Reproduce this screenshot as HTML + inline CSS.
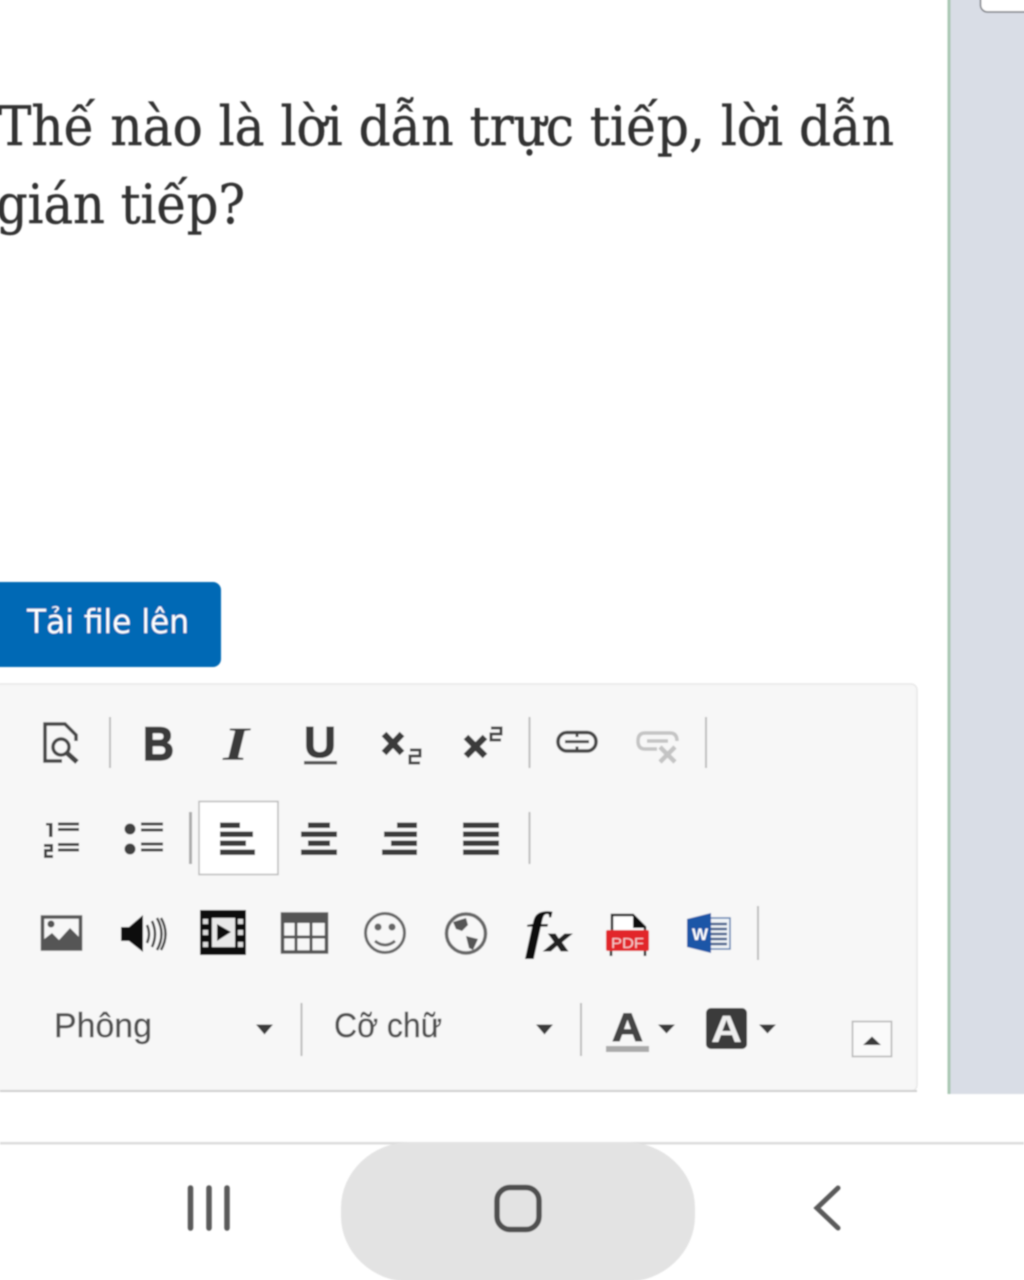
<!DOCTYPE html>
<html>
<head>
<meta charset="utf-8">
<style>
html,body{margin:0;padding:0;background:#fff;width:1024px;height:1280px;overflow:hidden}
svg{display:block;position:absolute;left:0;top:0}
</style>
</head>
<body>
<svg width="1024" height="1280" viewBox="0 0 1024 1280" xmlns="http://www.w3.org/2000/svg">
<defs><filter id="b" x="-5%" y="-5%" width="110%" height="110%"><feGaussianBlur stdDeviation="0.7"/></filter></defs>
<rect width="1024" height="1280" fill="#fff"/>
<g filter="url(#b)">
<!-- sidebar -->
<rect x="948" y="-5" width="80" height="1099" fill="#d9dde6"/>
<rect x="947.5" y="-5" width="3" height="1099" fill="#a9c7b2"/>
<rect x="980.500" y="-10" width="60" height="22" rx="7" fill="#fff" stroke="#77797f" stroke-width="1.500"/>

<!-- title -->
<text x="-2" y="145" font-family="'DejaVu Serif',serif" font-size="54" fill="#333" stroke="#333" stroke-width="0.5" textLength="896" lengthAdjust="spacingAndGlyphs">Thế nào là lời dẫn trực tiếp, lời dẫn</text>
<text x="-4" y="223" font-family="'DejaVu Serif',serif" font-size="54" fill="#333" stroke="#333" stroke-width="0.5" textLength="249" lengthAdjust="spacingAndGlyphs">gián tiếp?</text>

<!-- button -->
<rect x="-10" y="582" width="231" height="85" rx="8" fill="#0069b5"/>
<text x="27" y="633" font-family="'DejaVu Sans',sans-serif" font-size="33" fill="#fff" textLength="162" lengthAdjust="spacingAndGlyphs">Tải file lên</text>

<!-- panel -->
<rect x="-6" y="684" width="923" height="407" rx="6" fill="#f7f7f7" stroke="#e8e8e8" stroke-width="1.500"/>
<rect x="0" y="1090" width="917" height="2" fill="#cfcfcf"/>

<!-- separators -->
<g fill="#bdbdbd">
<rect x="109" y="717" width="2" height="51"/>
<rect x="528.500" y="717" width="2" height="51"/>
<rect x="705" y="717" width="2" height="51"/>
<rect x="189" y="812" width="3" height="52" fill="#aaa"/>
<rect x="528.500" y="812" width="2" height="52"/>
<rect x="757" y="906" width="2" height="54"/>
<rect x="300.500" y="1003" width="2" height="53"/>
<rect x="580" y="1003" width="2" height="53"/>
</g>

<!-- row 1 -->
<g fill="none" stroke="#444" stroke-width="3.500">
<path d="M62 761H45V724H65L76 735V741"/>
<circle cx="61" cy="747" r="8"/>
<path d="M67 753L77 762" stroke-width="5"/>
</g>
<text x="143" y="760" font-family="'Liberation Sans',sans-serif" font-weight="700" font-size="47" fill="#3a3a3a" stroke="#3a3a3a" stroke-width="1.500" textLength="31" lengthAdjust="spacingAndGlyphs">B</text>
<text x="223" y="760" font-family="'Liberation Serif',serif" font-weight="700" font-style="italic" font-size="48" fill="#3a3a3a" textLength="26" lengthAdjust="spacingAndGlyphs">I</text>
<text x="304" y="757" font-family="'Liberation Sans',sans-serif" font-weight="700" font-size="44" fill="#3a3a3a" stroke="#3a3a3a" stroke-width="1" textLength="32" lengthAdjust="spacingAndGlyphs">U</text>
<rect x="304" y="761" width="33" height="3.500" fill="#555"/>
<g fill="none" stroke="#3a3a3a" stroke-width="6.500">
<path d="M384 734L402 753M402 734L384 753"/>
<path d="M466 737L485 756M485 737L466 756"/>
</g>
<g fill="none" stroke="#444" stroke-width="3">
<path d="M410 750H420V756H410V763H420"/>
<path d="M491 728H501V734H491V740H501"/>
</g>
<g fill="none" stroke="#444">
<rect x="558" y="732.500" width="38" height="18.500" rx="9" stroke-width="3.500"/>
<path d="M565 741.700H589" stroke-width="2.800"/>
<path d="M577 733V737M577 746.500V750.500" stroke="#444" stroke-width="3"/>
</g>
<g fill="none" stroke="#c4c4c4" stroke-width="3.500">
<path d="M660 733H645Q638 733 638 741Q638 749 645 749H657"/>
<path d="M660 733H670Q677 733 677 741"/>
<path d="M647 741H668"/>
<path d="M660 747L675 762M675 747L660 762" stroke-width="4.500"/>
</g>

<!-- row 2 -->
<g fill="#404040">
<rect x="58" y="822.500" width="21" height="3"/><rect x="58" y="828" width="21" height="3"/>
<rect x="58" y="843" width="21" height="3"/><rect x="58" y="848.500" width="21" height="3"/>
<rect x="49" y="823" width="3.500" height="14"/><rect x="46" y="823" width="5" height="2.500"/>
<path d="M44 844H53V852H47V855H53V858H44V849H50V847H44Z"/>
<circle cx="130" cy="829" r="5.500"/><circle cx="130" cy="849" r="5.500"/>
<rect x="141" y="822.500" width="22" height="3"/><rect x="141" y="828.500" width="22" height="3"/>
<rect x="141" y="842.500" width="22" height="3"/><rect x="141" y="848.500" width="22" height="3"/>
</g>
<rect x="199" y="801.500" width="79" height="73" fill="#fff" stroke="#bbb" stroke-width="1.500"/>
<g fill="#3a3a3a">
<rect x="220" y="822.500" width="20" height="5.500"/><rect x="220" y="831.500" width="33" height="5.500"/><rect x="220" y="840.500" width="26" height="5.500"/><rect x="220" y="849.500" width="35" height="5.500"/>
<rect x="308" y="822.500" width="22" height="5.500"/><rect x="301" y="831.500" width="36" height="5.500"/><rect x="308" y="840.500" width="22" height="5.500"/><rect x="301" y="849.500" width="36" height="5.500"/>
<rect x="397" y="822.500" width="20" height="5.500"/><rect x="384" y="831.500" width="33" height="5.500"/><rect x="391" y="840.500" width="26" height="5.500"/><rect x="382" y="849.500" width="35" height="5.500"/>
<rect x="463" y="822.500" width="36" height="5.500"/><rect x="463" y="831.500" width="36" height="5.500"/><rect x="463" y="840.500" width="36" height="5.500"/><rect x="463" y="849.500" width="36" height="5.500"/>
</g>

<!-- row 3 -->
<rect x="42.500" y="917" width="38" height="32" fill="#f7f7f7" stroke="#555" stroke-width="3.500"/>
<circle cx="51" cy="924" r="3.500" fill="#555"/>
<path d="M43 949V940L52 933L59 940L70 928L80 938V949Z" fill="#555"/>
<path d="M121 927H129L143 915V952L129 941H121Z" fill="#111"/>
<g fill="none" stroke="#444" stroke-width="2.500">
<path d="M147 925Q151 934 147 943"/><path d="M152 921Q158 934 152 947"/><path d="M157 918Q166 934 157 950"/><path d="M161 918Q170 934 161 950"/>
</g>
<rect x="200" y="910" width="46" height="45" fill="#0a0a0a"/>
<rect x="212" y="918" width="23" height="29" fill="#e8e8e8"/>
<path d="M217 924L231 932L217 941Z" fill="#0a0a0a"/>
<g fill="#ddd">
<rect x="203" y="919" width="5" height="5"/><rect x="203" y="930" width="5" height="5"/><rect x="203" y="942" width="5" height="5"/>
<rect x="238" y="919" width="5" height="5"/><rect x="238" y="930" width="5" height="5"/><rect x="238" y="942" width="5" height="5"/>
</g>
<rect x="282.500" y="914" width="44" height="38" fill="#f7f7f7" stroke="#555" stroke-width="3.500"/>
<rect x="281" y="913" width="46" height="10" fill="#555"/>
<path d="M296 923V952M311 923V952M282 937H326" stroke="#555" stroke-width="3" fill="none"/>
<g fill="none" stroke="#666" stroke-width="3">
<circle cx="385" cy="933" r="19.500"/>
<path d="M375 941Q385 949 395 941"/>
</g>
<circle cx="378" cy="927" r="3.500" fill="#666"/><circle cx="392" cy="927" r="3.500" fill="#666"/>
<circle cx="466" cy="933.500" r="19.500" fill="none" stroke="#666" stroke-width="3.500"/>
<path d="M453 922L466 918L468 925L462 931L456 929ZM466 936L478 939L473 950L469 948Z" fill="#555"/>
<text x="525" y="948" font-family="'Liberation Serif',serif" font-weight="700" font-style="italic" font-size="52" fill="#111" textLength="22" lengthAdjust="spacingAndGlyphs">f</text>
<text x="546" y="951" font-family="'Liberation Sans',sans-serif" font-weight="700" font-style="italic" font-size="32" fill="#222" stroke="#222" stroke-width="1" textLength="24" lengthAdjust="spacingAndGlyphs">x</text>
<path d="M612 930V915H633L645 927V930" fill="#fff" stroke="#222" stroke-width="2.500"/>
<path d="M633 914L646 928H633Z" fill="#111"/>
<rect x="606" y="930" width="43" height="21" rx="2" fill="#e2252b"/>
<path d="M611 951V956M645 951V956" stroke="#222" stroke-width="2.500"/>
<text x="611" y="948" font-family="'Liberation Sans',sans-serif" font-size="15" fill="#f4d0d0" textLength="33" lengthAdjust="spacingAndGlyphs">PDF</text>
<rect x="704" y="918" width="26" height="31" fill="#f1f4f8" stroke="#5a7fb0" stroke-width="1.500"/>
<path d="M709 924H727M709 929H727M709 934H727M709 939H727M709 944H727" stroke="#44618c" stroke-width="2.500"/>
<path d="M687 919L711 913V953L687 947Z" fill="#1f57a7"/>
<text x="692" y="940" font-family="'Liberation Sans',sans-serif" font-weight="700" font-size="17" fill="#fff" textLength="16" lengthAdjust="spacingAndGlyphs">W</text>

<!-- row 4 -->
<text x="54" y="1037" font-family="'Liberation Sans',sans-serif" font-size="34" fill="#505050" stroke="#505050" stroke-width="0.400" textLength="98" lengthAdjust="spacingAndGlyphs">Phông</text>
<text x="334" y="1037" font-family="'Liberation Sans',sans-serif" font-size="34" fill="#505050" stroke="#505050" stroke-width="0.400" textLength="108" lengthAdjust="spacingAndGlyphs">Cỡ chữ</text>
<g fill="#3b3b3b">
<path d="M256 1024.500H273L264.500 1034.500Z"/>
<path d="M536 1024.500H553L544.500 1034.500Z"/>
<path d="M658 1024.500H675L666.500 1033.500Z"/>
<path d="M759 1024.500H776L767.500 1033.500Z"/>
</g>
<text x="612" y="1041" font-family="'Liberation Sans',sans-serif" font-weight="700" font-size="40" fill="#454545" stroke="#454545" stroke-width="1" textLength="31" lengthAdjust="spacingAndGlyphs">A</text>
<rect x="606" y="1046" width="43" height="6" fill="#aaa"/>
<rect x="706" y="1008" width="41" height="41" rx="5" fill="#3a3a3a"/>
<text x="711" y="1042" font-family="'Liberation Sans',sans-serif" font-weight="700" font-size="38" fill="#eee" textLength="31" lengthAdjust="spacingAndGlyphs">A</text>
<rect x="852.500" y="1021.500" width="39" height="35" fill="#fafafa" stroke="#b5b5b5" stroke-width="1.500"/>
<path d="M863 1045H881L872 1036.500Z" fill="#3b3b3b"/>

<!-- nav -->
<rect x="0" y="1142" width="1024" height="2.500" fill="#dcdcdc"/>
<rect x="341" y="1142" width="354" height="140" rx="70" ry="66" fill="#e3e3e3"/>
<g stroke="#5a5a5a" stroke-width="5.500" stroke-linecap="round" fill="none">
<path d="M190.500 1188V1228M209 1188V1228M227 1188V1228"/>
<path d="M838 1188L817 1208L838 1228" stroke-width="5"/>
</g>
<rect x="497" y="1187.500" width="42" height="42" rx="13" fill="none" stroke="#505050" stroke-width="5.500"/>
</g>
</svg>
</body>
</html>
